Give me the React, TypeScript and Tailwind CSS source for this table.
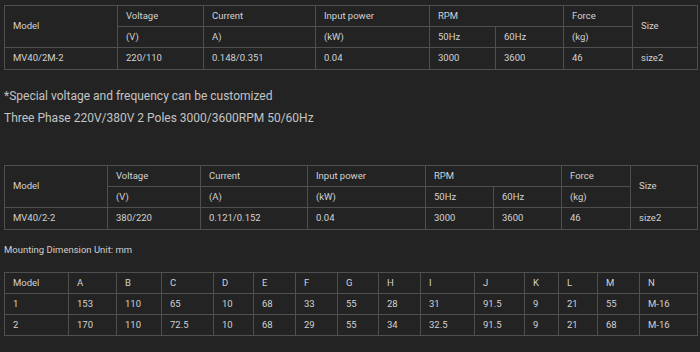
import React from "react";

const cell = "border border-[#4f4f4f] px-[8px] align-middle font-normal text-left";

function SpecTable({
  widths,
  model,
  voltage,
  current,
  currentUnit,
  power,
  force,
}: {
  widths: number[];
  model: string;
  voltage: string;
  current: string;
  currentUnit: string;
  power: string;
  force: string;
}) {
  return (
    <table className="border-collapse table-fixed w-[693px] text-[9.5px] text-[#d2d2d2]">
      <colgroup>
        {widths.map((w, i) => (
          <col key={i} style={{ width: w }} />
        ))}
      </colgroup>
      <tbody>
        <tr className="h-[21px]">
          <td rowSpan={2} className={cell}>Model</td>
          <td className={cell}>Voltage</td>
          <td className={cell}>Current</td>
          <td className={cell}>Input power</td>
          <td colSpan={2} className={cell}>RPM</td>
          <td className={cell}>Force</td>
          <td rowSpan={2} className={cell}>Size</td>
        </tr>
        <tr className="h-[21px]">
          <td className={cell}>(V)</td>
          <td className={cell}>{currentUnit}</td>
          <td className={cell}>(kW)</td>
          <td className={cell}>50Hz</td>
          <td className={cell}>60Hz</td>
          <td className={cell}>(kg)</td>
        </tr>
        <tr className="h-[22px]">
          <td className={cell}>{model}</td>
          <td className={cell}>{voltage}</td>
          <td className={cell}>{current}</td>
          <td className={cell}>{power}</td>
          <td className={cell}>3000</td>
          <td className={cell}>3600</td>
          <td className={cell}>{force}</td>
          <td className={cell}>size2</td>
        </tr>
      </tbody>
    </table>
  );
}

const dimHead = ["Model", "A", "B", "C", "D", "E", "F", "G", "H", "I", "J", "K", "L", "M", "N"];
const dimRows = [
  ["1", "153", "110", "65", "10", "68", "33", "55", "28", "31", "91.5", "9", "21", "55", "M-16"],
  ["2", "170", "110", "72.5", "10", "68", "29", "55", "34", "32.5", "91.5", "9", "21", "68", "M-16"],
];
const dimWidths = [64, 48, 45, 52, 40, 42, 42, 41, 42, 54, 50, 34, 39, 42, 58];

export default function App() {
  return (
    <div className="w-[700px] h-[352px] bg-[#232323] overflow-hidden pl-[4px] pt-[5px] font-['Roboto',sans-serif]">
      <SpecTable
        widths={[113, 86, 112, 114, 66, 68, 69, 65]}
        model="MV40/2M-2"
        voltage="220/110"
        current="0.148/0.351"
        currentUnit="A)"
        power="0.04"
        force="46"
      />
      <div className="mt-[15px] text-[12px] leading-[22px] text-[#c4c4c4]">
        <p>*Special voltage and frequency can be customized</p>
        <p>Three Phase 220V/380V 2 Poles 3000/3600RPM 50/60Hz</p>
      </div>
      <div className="mt-[36px]">
        <SpecTable
          widths={[103, 93, 107, 118, 68, 68, 69, 67]}
          model="MV40/2-2"
          voltage="380/220"
          current="0.121/0.152"
          currentUnit="(A)"
          power="0.04"
          force="46"
        />
      </div>
      <p className="mt-[13px] text-[9.5px] leading-[14px] text-[#cfcfcf]">Mounting Dimension Unit: mm</p>
      <table className="mt-[15px] border-collapse table-fixed w-[693px] text-[9.5px] text-[#d2d2d2]">
        <colgroup>
          {dimWidths.map((w, i) => (
            <col key={i} style={{ width: w }} />
          ))}
        </colgroup>
        <tbody>
          <tr className="h-[21px]">
            {dimHead.map((h, i) => (
              <td key={i} className={cell}>{h}</td>
            ))}
          </tr>
          {dimRows.map((r, ri) => (
            <tr key={ri} className="h-[21px]">
              {r.map((v, i) => (
                <td key={i} className={cell}>{v}</td>
              ))}
            </tr>
          ))}
        </tbody>
      </table>
    </div>
  );
}
